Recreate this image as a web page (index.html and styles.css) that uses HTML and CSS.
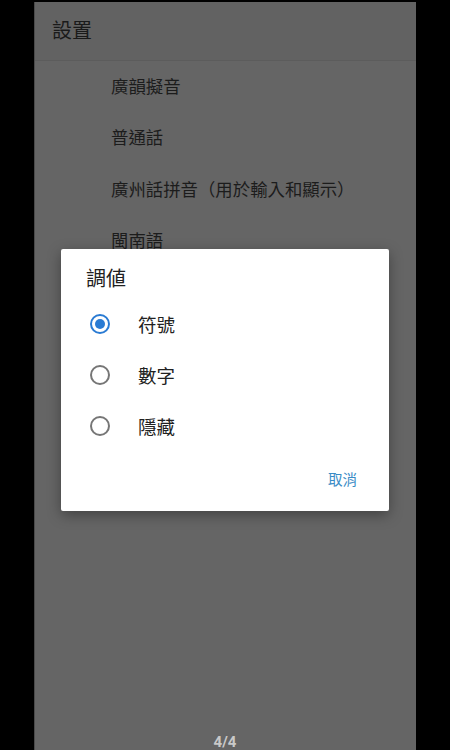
FILE: index.html
```html
<!DOCTYPE html>
<html lang="zh-Hant">
<head>
<meta charset="utf-8">
<link rel="stylesheet" href="styles.css">
</head>
<body>
<div class="screen">
  <header class="appbar">設置</header>
  <ul class="list">
    <li>廣韻擬音</li>
    <li>普通話</li>
    <li>廣州話拼音（用於輸入和顯示）</li>
    <li>閩南語</li>
  </ul>
  <div class="scrim">
    <div class="dialog">
      <div class="dialog-title">調値</div>
      <div class="options">
        <div class="option"><span class="radio checked"></span><span class="label">符號</span></div>
        <div class="option"><span class="radio"></span><span class="label">數字</span></div>
        <div class="option"><span class="radio"></span><span class="label">隱藏</span></div>
      </div>
      <div class="actions"><span class="btn">取消</span></div>
    </div>
  </div>
  <div class="pager">4/4</div>
</div>
</body>
</html>
```
FILE: styles.css
```css
html, body {
  margin: 0;
  padding: 0;
  background: #000;
  height: 750px;
  overflow: hidden;
}
body {
  font-family: Roboto, "Noto Sans CJK TC", "Noto Sans", sans-serif;
  padding-top: 2px;
  box-sizing: border-box;
}
.screen {
  position: relative;
  margin-left: 34px;
  width: 382px;
  height: 748px;
  background: #656565;
  border-left: 1px solid #4a4a4a;
  box-sizing: border-box;
}
.appbar {
  height: 59px;
  line-height: 59px;
  padding-left: 17px;
  font-size: 20px;
  color: #1a1a1a;
  background: #626262;
  border-bottom: 1px solid #5c5c5c;
  box-sizing: border-box;
}
.list {
  list-style: none;
  margin: 0;
  padding: 1px 0 0 0;
}
.list li {
  height: 51.3px;
  line-height: 51.3px;
  padding-left: 76px;
  font-size: 17.4px;
  color: #1c1c1c;
}
.scrim {
  position: absolute;
  top: 0;
  bottom: 0;
  left: -1px;
  right: 0;
  display: flex;
  justify-content: center;
  align-items: flex-start;
  padding-top: 247px;
}
.dialog {
  width: 328px;
  height: 262px;
  background: #fff;
  border-radius: 2px;
  box-shadow: 0 4px 14px rgba(0,0,0,0.35);
  display: flex;
  flex-direction: column;
  box-sizing: border-box;
  padding-top: 16px;
}
.dialog-title {
  padding-left: 25px;
  font-size: 20px;
  line-height: 28px;
  color: #212121;
}
.options {
  margin-top: 5px;
  display: flex;
  flex-direction: column;
}
.option {
  height: 51px;
  display: flex;
  align-items: center;
  padding-left: 29px;
  gap: 28px;
}
.radio {
  width: 20px;
  height: 20px;
  box-sizing: border-box;
  border: 2px solid #767676;
  border-radius: 50%;
  display: flex;
  align-items: center;
  justify-content: center;
  flex: none;
}
.radio.checked {
  border-color: #2a7bd3;
}
.radio.checked::after {
  content: "";
  width: 10px;
  height: 10px;
  border-radius: 50%;
  background: #2a7bd3;
}
.label {
  font-size: 18.5px;
  color: #212121;
}
.actions {
  margin-top: 12px;
  display: flex;
  justify-content: flex-end;
  padding-right: 32px;
}
.btn {
  font-size: 14.5px;
  line-height: 36px;
  color: #3a8cc6;
}
.pager {
  position: absolute;
  left: -1px;
  right: 0;
  bottom: 0;
  text-align: center;
  font-size: 15px;
  font-weight: bold;
  color: #c9c9c9;
  line-height: 16px;
}
```
